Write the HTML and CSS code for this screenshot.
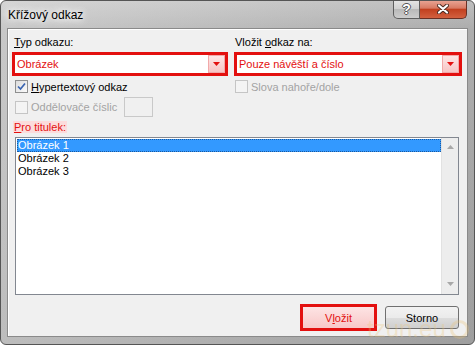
FILE: index.html
```html
<!DOCTYPE html>
<html lang="cs">
<head>
    <meta charset="UTF-8">
    <title>Křížový odkaz</title>
    <link rel="stylesheet" href="styles.css">
</head>
<body>
    <div class="window">
        <div class="titlebar">
            <span class="title">Křížový odkaz</span>
            <div class="caption-buttons">
                <span class="cap-btn help">?</span>
                <span class="cap-btn close">
                    <svg width="12" height="10" viewBox="0 0 12 10">
                        <path d="M2 1.5 L10 8.5 M10 1.5 L2 8.5" stroke="#4a2a22" stroke-width="4" stroke-linecap="round"/>
                        <path d="M2 1.5 L10 8.5 M10 1.5 L2 8.5" stroke="#fff" stroke-width="2.2" stroke-linecap="round"/>
                    </svg>
                </span>
            </div>
        </div>

        <div class="content">
            <div class="fields">
                <div class="field">
                    <label class="lbl"><u>T</u>yp odkazu:</label>
                    <div class="combo">
                        <span class="combo-text">Obrázek</span>
                        <span class="combo-btn"><svg width="7" height="4" viewBox="0 0 7 4"><path d="M0 0 H7 L3.5 4 Z" fill="#e3100f"/></svg></span>
                    </div>
                    <div class="check-row">
                        <span class="checkbox">
                            <svg width="11" height="11" viewBox="0 0 11 11"><path d="M2 5.5 L4.5 8 L9 2.5" fill="none" stroke="#3a64b0" stroke-width="1.7"/></svg>
                        </span>
                        <span><u>H</u>ypertextový odkaz</span>
                    </div>
                    <div class="check-row tall disabled">
                        <span class="checkbox"></span>
                        <span class="sep-text">Oddělovače číslic</span>
                        <span class="sep-box"></span>
                    </div>
                </div>
                <div class="field right">
                    <label class="lbl">Vložit <u>o</u>dkaz na:</label>
                    <div class="combo">
                        <span class="combo-text">Pouze návěští a číslo</span>
                        <span class="combo-btn"><svg width="7" height="4" viewBox="0 0 7 4"><path d="M0 0 H7 L3.5 4 Z" fill="#e3100f"/></svg></span>
                    </div>
                    <div class="check-row disabled">
                        <span class="checkbox"></span>
                        <span>Slova nahoře/dole</span>
                    </div>
                </div>
            </div>

            <div class="caption-label"><span><u>P</u>ro titulek:</span></div>
            <div class="listbox">
                <div class="items">
                    <div class="item selected">Obrázek 1</div>
                    <div class="item">Obrázek 2</div>
                    <div class="item">Obrázek 3</div>
                </div>
                <div class="scrollbar">
                    <svg width="7" height="4" viewBox="0 0 7 4"><path d="M0 4 H7 L3.5 0 Z" fill="#a8a8a8"/></svg>
                    <svg width="7" height="4" viewBox="0 0 7 4"><path d="M0 0 H7 L3.5 4 Z" fill="#a8a8a8"/></svg>
                </div>
            </div>

            <div class="actions">
                <button class="btn primary">V<u>l</u>ožit</button>
                <button class="btn">Storno</button>
            </div>
        </div>

        <div class="watermark">tzun.eu <span class="wm-logo"></span></div>
    </div>
</body>
</html>
```

FILE: styles.css
```css
body {
    margin: 0;
    font-family: "Liberation Sans", Arial, sans-serif;
    font-size: 11px;
    background: #fff;
}

.window {
    width: 475px;
    height: 345px;
    box-sizing: border-box;
    border: 1px solid #555;
    border-radius: 6px;
    background: linear-gradient(to right, rgba(255,255,255,0.25), rgba(0,0,0,0.05)),
                linear-gradient(to bottom, #c8c8c8 0, #b6b6b6 28px, #a7a7a7 100%);
    padding: 0 6px 7px 6px;
    display: flex;
    flex-direction: column;
    position: relative;
    overflow: hidden;
}

/* title bar */
.titlebar {
    height: 27px;
    display: flex;
    flex: none;
}
.title {
    padding: 7px 0 0 1px;
    line-height: 14px;
    font-size: 12px;
    color: #000;
    text-shadow: 0 0 6px #fff, 0 0 10px #fff, 0 0 14px #fff;
}
.caption-buttons {
    margin: -1px 1px 0 auto;
    display: flex;
    height: 19px;
}
.cap-btn {
    height: 19px;
    box-sizing: border-box;
    display: flex;
    align-items: center;
    justify-content: center;
    border: 1px solid #5e5e5e;
    border-top: none;
}
.help {
    width: 27px;
    border-radius: 0 0 0 5px;
    background: linear-gradient(#e6e6e6, #d0d0d0 50%, #b9b9b9 52%, #cdcdcd);
    color: #fff;
    font-weight: bold;
    font-size: 14px;
    text-shadow: -1px 0 #555, 1px 0 #555, 0 -1px #555, 0 1px #555;
}
.close {
    width: 47px;
    border-left: none;
    border-color: #6a3024;
    border-radius: 0 0 5px 0;
    background: linear-gradient(#eaa898, #d87a63 45%, #c2401f 52%, #d3603f);
}

/* dialog body */
.content {
    flex: 1;
    background: #f0f0f0;
    border: 1px solid #8a8a8a;
    box-shadow: inset 1px 1px 0 #fff;
    padding: 7px 6px 0 4px;
}

.fields {
    display: grid;
    grid-template-columns: 216px 228px;
    column-gap: 6px;
}
.lbl {
    display: block;
    height: 13px;
    line-height: 13px;
    margin: 0 0 3px 2px;
}
.right .lbl {
    margin-left: 1px;
}

.combo {
    height: 24px;
    box-sizing: border-box;
    border: 3px solid #e3100f;
    background: #fff;
    display: flex;
    align-items: center;
    color: #e3100f;
}
.combo-text {
    flex: 1;
    padding-left: 2px;
}
.combo-btn {
    width: 17px;
    align-self: stretch;
    box-sizing: border-box;
    background: linear-gradient(#fde6e6, #f7c5c5);
    border: 1px solid #f1a9a9;
    display: flex;
    align-items: center;
    justify-content: center;
}

.check-row {
    display: flex;
    align-items: center;
    gap: 3px;
    height: 13px;
    margin: 4px 0 0 3px;
}
.check-row.tall {
    height: 20px;
}
.right .check-row {
    margin-left: 1px;
}
.checkbox {
    width: 13px;
    height: 13px;
    box-sizing: border-box;
    border: 1px solid #8e8f8f;
    background: linear-gradient(135deg, #dcdcdc, #fbfbfb);
    display: flex;
    align-items: center;
    justify-content: center;
}
.disabled {
    color: #a3a3a3;
}
.disabled .checkbox {
    border-color: #c5c5c5;
    background: #f4f4f4;
}
.sep-text {
    width: 90px;
}
.sep-box {
    width: 29px;
    height: 20px;
    box-sizing: border-box;
    border: 1px solid #c9c9c9;
    background: #f0f0f0;
}

.caption-label {
    margin: 4px 0 0 1px;
    height: 13px;
    line-height: 13px;
}
.caption-label span {
    background: #fcdcdc;
    color: #e3100f;
    padding: 0 1px;
}

.listbox {
    margin: 3px 2px 0 3px;
    height: 158px;
    box-sizing: border-box;
    border: 1px solid #828790;
    background: #fff;
    display: flex;
}
.items {
    flex: 1;
    padding: 1px 0 0 1px;
}
.item {
    height: 13px;
    line-height: 13px;
    padding-left: 1px;
}
.item.selected {
    background: #3399ff;
    color: #fff;
    outline: 1px dotted #1c5a9e;
    outline-offset: -1px;
}
.scrollbar {
    width: 17px;
    box-sizing: border-box;
    background: #ededed;
    border-left: 1px solid #e2e2e2;
    display: flex;
    flex-direction: column;
    align-items: center;
    justify-content: space-between;
    padding: 7px 0 8px;
}

.actions {
    display: flex;
    justify-content: flex-end;
    align-items: center;
    gap: 8px;
    margin: 9px 2px 0 0;
}
.btn {
    font: inherit;
    font-weight: normal;
    width: 74px;
    height: 23px;
    border: 1px solid #707070;
    border-radius: 3px;
    background: linear-gradient(#f2f2f2, #ebebeb 50%, #dddddd 51%, #cfcfcf);
    color: #000;
    padding: 0;
}
.btn.primary {
    width: 77px;
    height: 27px;
    border: 3px solid #e3100f;
    border-radius: 0;
    background: linear-gradient(#fde4e4, #f8c8c8);
    color: #e3100f;
}

/* faint site logo over the corner */
.watermark {
    position: absolute;
    left: 366px;
    top: 316px;
    font-size: 24px;
    line-height: 24px;
    color: rgba(236, 196, 120, 0.3);
    display: flex;
    align-items: center;
    gap: 4px;
}
.wm-logo {
    width: 13px;
    height: 13px;
    border: 3px solid rgba(236, 196, 120, 0.3);
    border-radius: 50%;
}
```
